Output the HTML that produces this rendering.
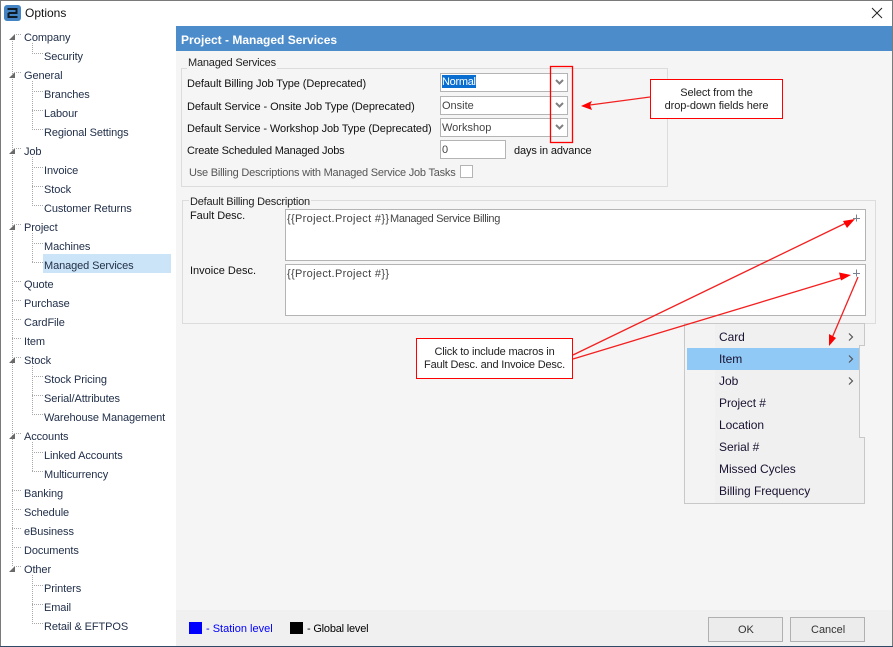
<!DOCTYPE html>
<html><head><meta charset="utf-8"><style>
html,body{margin:0;padding:0;background:#fff}
#w{position:relative;width:893px;height:647px;overflow:hidden;background:#fff;font:11px/14px "Liberation Sans",sans-serif;color:#1b2a3e}
#w div,#w span{position:absolute;box-sizing:border-box}
#w span{white-space:nowrap}
.t{height:14px;letter-spacing:-.1px;color:#22304a}
.l{color:#111;height:14px;letter-spacing:-.08px}
.box{background:#fff;border:1px solid #b4b4b4}
.m{color:#1a1230;font-size:12px;left:719px;letter-spacing:-.05px}
</style></head><body><div id="w">
<div style="left:176px;top:26px;width:717px;height:621px;background:#f5f5f5"></div>
<div style="left:176px;top:26px;width:716px;height:25px;background:#4d8ccb"></div>
<span style="left:181px;top:33px;color:#fff;font-weight:bold;font-size:12px">Project - Managed Services</span>
<div style="left:176px;top:610px;width:716px;height:36px;background:#f0f0f0"></div>
<div style="left:43px;top:254px;width:128px;height:19px;background:#cce4f7"></div>

<svg style="position:absolute;left:0;top:0" width="176" height="647"><g stroke="#a8a8a8" stroke-dasharray="1 1" fill="none">
<path transform="translate(0,-3)" d="M12.500 40V569M32.500 46V56M32.500 84V132M32.500 160V208M32.500 236V265M32.500 369V417M32.500 445V474M32.500 578V626"/>
<path transform="translate(0,-2.500)" d="M16 37H22M16 75H22M16 151H22M16 227H22M12 284H22M12 303H22M12 322H22M12 341H22M16 360H22M16 436H22M12 493H22M12 512H22M12 531H22M12 550H22M16 569H22M32 56H43M32 94H43M32 113H43M32 132H43M32 170H43M32 189H43M32 208H43M32 246H43M32 265H43M32 379H43M32 398H43M32 417H43M32 455H43M32 474H43M32 588H43M32 607H43M32 626H43"/>
</g><g fill="#6a6a6a"><path d="M15 34V40H9ZM15 72V78H9ZM15 148V154H9ZM15 224V230H9ZM15 357V363H9ZM15 433V439H9ZM15 566V572H9Z"/></g></svg>

<span class="t" style="left:24px;top:31px">Company</span>
<span class="t" style="left:44px;top:50px">Security</span>
<span class="t" style="left:24px;top:69px">General</span>
<span class="t" style="left:44px;top:88px">Branches</span>
<span class="t" style="left:44px;top:107px">Labour</span>
<span class="t" style="left:44px;top:126px">Regional Settings</span>
<span class="t" style="left:24px;top:145px">Job</span>
<span class="t" style="left:44px;top:164px">Invoice</span>
<span class="t" style="left:44px;top:183px">Stock</span>
<span class="t" style="left:44px;top:202px">Customer Returns</span>
<span class="t" style="left:24px;top:221px">Project</span>
<span class="t" style="left:44px;top:240px">Machines</span>
<span class="t" style="left:44px;top:259px">Managed Services</span>
<span class="t" style="left:24px;top:278px">Quote</span>
<span class="t" style="left:24px;top:297px">Purchase</span>
<span class="t" style="left:24px;top:316px">CardFile</span>
<span class="t" style="left:24px;top:335px">Item</span>
<span class="t" style="left:24px;top:354px">Stock</span>
<span class="t" style="left:44px;top:373px">Stock Pricing</span>
<span class="t" style="left:44px;top:392px">Serial/Attributes</span>
<span class="t" style="left:44px;top:411px">Warehouse Management</span>
<span class="t" style="left:24px;top:430px">Accounts</span>
<span class="t" style="left:44px;top:449px">Linked Accounts</span>
<span class="t" style="left:44px;top:468px">Multicurrency</span>
<span class="t" style="left:24px;top:487px">Banking</span>
<span class="t" style="left:24px;top:506px">Schedule</span>
<span class="t" style="left:24px;top:525px">eBusiness</span>
<span class="t" style="left:24px;top:544px">Documents</span>
<span class="t" style="left:24px;top:563px">Other</span>
<span class="t" style="left:44px;top:582px">Printers</span>
<span class="t" style="left:44px;top:601px">Email</span>
<span class="t" style="left:44px;top:620px">Retail &amp; EFTPOS</span>

<div style="left:4px;top:5px;width:17px;height:16px;background:#4484c4;border-radius:3px"></div>
<svg style="position:absolute;left:4px;top:5px" width="17" height="16"><path d="M3.500 4H12.500V8H4.500M4.500 8V12H13.500" fill="none" stroke="#0e1a26" stroke-width="2"/></svg>
<span style="left:25px;top:6px;font-size:12px;color:#111">Options</span>
<svg style="position:absolute;left:871px;top:7px" width="12" height="12"><path d="M1 1L11 11M11 1L1 11" stroke="#222" stroke-width="1"/></svg>

<div style="left:181px;top:68px;width:487px;height:119px;border:1px solid #dcdcdc"></div>
<span class="l" style="left:187px;top:56px;background:#f5f5f5;padding:0 1px;color:#222;letter-spacing:-.2px">Managed Services</span>
<span class="l" style="left:187px;top:77px">Default Billing Job Type (Deprecated)</span>
<span class="l" style="left:187px;top:100px;letter-spacing:-.07px">Default Service - Onsite Job Type (Deprecated)</span>
<span class="l" style="left:187px;top:122px">Default Service - Workshop Job Type (Deprecated)</span>
<span class="l" style="left:187px;top:144px;letter-spacing:-.2px">Create Scheduled Managed Jobs</span>
<span class="l" style="left:189px;top:166px;color:#555;letter-spacing:-.22px">Use Billing Descriptions with Managed Service Job Tasks</span>

<div class="box" style="left:440px;top:73px;width:128px;height:19px"></div>
<div class="box" style="left:440px;top:96px;width:128px;height:19px"></div>
<div class="box" style="left:440px;top:118px;width:128px;height:19px"></div>
<div class="box" style="left:440px;top:140px;width:66px;height:19px"></div>
<div class="box" style="left:460px;top:165px;width:13px;height:13px"></div>
<div style="left:442px;top:75px;width:34px;height:13px;background:#0a6ed1"></div>
<span style="left:442px;top:75px;color:#fff;letter-spacing:-.3px">Normal</span>
<span style="left:442px;top:99px;color:#444">Onsite</span>
<span style="left:442px;top:121px;color:#444">Workshop</span>
<span style="left:442px;top:143px;color:#444">0</span>
<span class="l" style="left:514px;top:144px;letter-spacing:-.13px">days in advance</span>
<svg style="position:absolute;left:0;top:0" width="893" height="647"><g fill="none" stroke="#808080" stroke-width="2"><path d="M556 80L559.500 83.500L563 80M556 103L559.500 106.500L563 103M556 125L559.500 128.500L563 125"/></g></svg>

<div style="left:182px;top:200px;width:694px;height:124px;border:1px solid #dcdcdc"></div>
<span class="l" style="left:189px;top:195px;background:#f5f5f5;padding:0 1px;color:#222;letter-spacing:-.2px">Default Billing Description</span>
<span class="l" style="left:190px;top:209px;letter-spacing:-.05px">Fault Desc.</span>
<span class="l" style="left:190px;top:264px;letter-spacing:0">Invoice Desc.</span>
<div class="box" style="left:285px;top:209px;width:581px;height:52px"></div>
<div class="box" style="left:285px;top:264px;width:581px;height:52px"></div>
<span style="left:287px;top:212px;color:#444;letter-spacing:.33px">{{Project.Project #}}</span>
<span style="left:390px;top:212px;color:#444;letter-spacing:-.35px">Managed Service Billing</span>
<span style="left:287px;top:267px;color:#444;letter-spacing:.33px">{{Project.Project #}}</span>
<svg style="position:absolute;left:0;top:0" width="893" height="647"><path d="M856.500 214.500V221.500M853 218.500H860M856.500 269.500V276.500M853 273.500H860" stroke="#7a8090" fill="none"/></svg>

<div style="left:684px;top:323px;width:181px;height:181px;background:#f0f0f0;border:1px solid #c8c8c8"></div>
<div style="left:685px;top:324px;width:30px;height:179px;background:#f3f3f3"></div>
<div style="left:859px;top:345px;width:6px;height:93px;background:#f5f5f5;border-left:1px solid #c8c8c8;border-top:1px solid #c8c8c8;border-bottom:1px solid #c8c8c8"></div>
<div style="left:687px;top:348px;width:172px;height:22px;background:#90c8f6"></div>
<span class="m" style="top:330px">Card</span>
<span class="m" style="top:352px">Item</span>
<span class="m" style="top:374px">Job</span>
<span class="m" style="top:396px">Project #</span>
<span class="m" style="top:418px">Location</span>
<span class="m" style="top:440px">Serial #</span>
<span class="m" style="top:462px">Missed Cycles</span>
<span class="m" style="top:484px">Billing Frequency</span>
<svg style="position:absolute;left:0;top:0" width="893" height="647"><path d="M849 333.500L852.500 337L849 340.500M849 355.500L852.500 359L849 362.500M849 377.500L852.500 381L849 384.500" stroke="#555" fill="none" stroke-width="1.200"/></svg>

<div style="left:650px;top:79px;width:133px;height:40px;border:1px solid #f00;background:#fff;"></div>
<div style="left:416px;top:338px;width:157px;height:41px;border:1px solid #f00;background:#fff"></div>
<div style="left:650px;top:87px;width:133px;height:30px;line-height:13px;text-align:center;color:#222;letter-spacing:-.1px">Select from the<br>drop-down fields here</div>
<div style="left:416px;top:346px;width:157px;height:30px;line-height:13px;text-align:center;color:#222;letter-spacing:-.18px">Click to include macros in<br>Fault Desc. and Invoice Desc.</div>
<svg style="position:absolute;left:0;top:0" width="893" height="647">
<rect x="550.500" y="66.500" width="22" height="76" fill="none" stroke="#f00" stroke-width="1.300"/>
<g stroke="#f32020" stroke-width="1.300" fill="none"><path d="M650 97L590 105M573 355L848 222M573 359L844 277M858 277L832 338"/></g>
<g fill="#f00"><path d="M581 106L592 101L590 105L592 110ZM855 219L843 221L847 228ZM851 275L839 272.500L841 280.500ZM829 346L829 334L836 338Z"/></g>
</svg>

<div style="left:189px;top:622px;width:13px;height:12px;background:#0000ff"></div>
<span style="left:206px;top:622px;color:#0000ff">- Station level</span>
<div style="left:290px;top:622px;width:13px;height:12px;background:#000"></div>
<span style="left:307px;top:622px;color:#000;letter-spacing:-.2px">- Global level</span>
<div style="left:708px;top:617px;width:75px;height:25px;background:#ececec;border:1px solid #b0b0b0"></div>
<div style="left:790px;top:617px;width:75px;height:25px;background:#ececec;border:1px solid #b0b0b0"></div>
<span style="left:738px;top:623px;color:#333">OK</span>
<span style="left:811px;top:623px;color:#333">Cancel</span>

<div style="left:0;top:0;width:893px;height:1px;background:#7a7a7a"></div>
<div style="left:892px;top:0;width:1px;height:647px;background:#7a7a7a"></div>
<div style="left:0;top:0;width:1px;height:647px;background:#7a7a7a"></div>
<div style="left:0;top:646px;width:893px;height:1px;background:#2f4a66"></div>
</div></body></html>
